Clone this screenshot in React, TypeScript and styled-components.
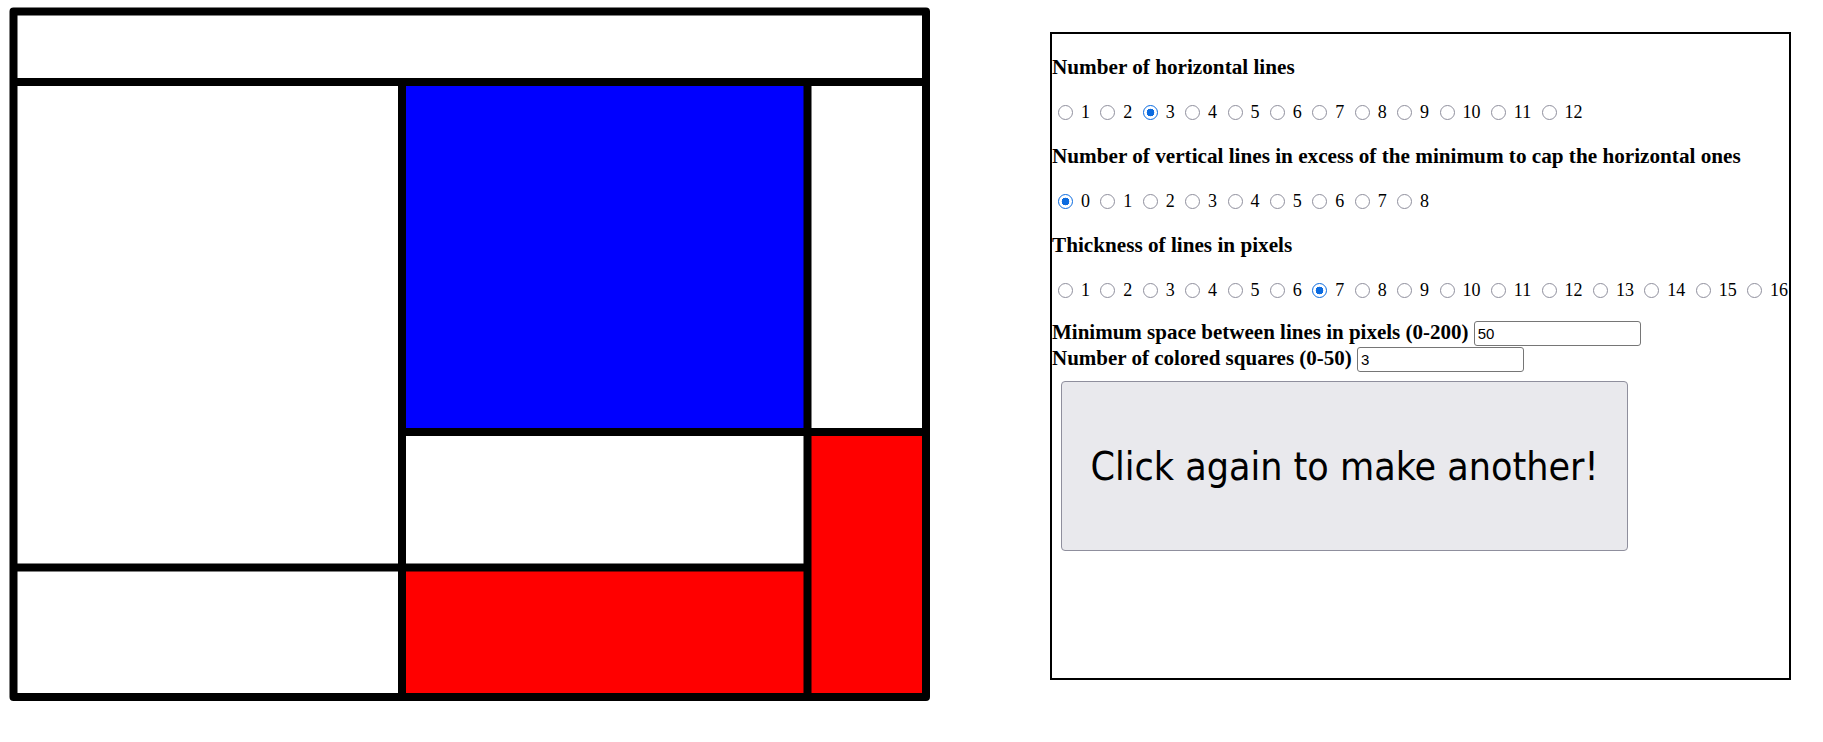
import React from 'react';
import styled, { createGlobalStyle } from 'styled-components';

const GlobalStyle = createGlobalStyle`
  html, body {
    margin: 0;
    padding: 0;
    background: #fff;
  }
`;

const range = (from: number, to: number) =>
  Array.from({ length: to - from + 1 }, (_, i) => from + i);

const groups = [
  { name: 'horizontal', title: 'Number of horizontal lines', values: range(1, 12), checked: 3 },
  {
    name: 'vertical',
    title: 'Number of vertical lines in excess of the minimum to cap the horizontal ones',
    values: range(0, 8),
    checked: 0,
  },
  { name: 'thickness', title: 'Thickness of lines in pixels', values: range(1, 16), checked: 7 },
];

// the painting: lines given by their centre, 8px strokes
const T = 8;
const L = 13.5;
const R = 926;
const TOP = 11.5;
const BOT = 697;
const H1 = 82;
const V1 = 402;
const V2 = 807.5;
const H2 = 432;
const H3 = 567.5;

const Painting = () => (
  <Canvas width={930} height={710} viewBox="0 0 930 710">
    <rect x={V1} y={H1} width={V2 - V1} height={H2 - H1} fill="#0000ff" />
    <rect x={V2} y={H2} width={R - V2} height={BOT - H2} fill="#ff0000" />
    <rect x={V1} y={H3} width={V2 - V1} height={BOT - H3} fill="#ff0000" />
    <g stroke="#000" strokeWidth={T}>
      <line x1={L} y1={H1} x2={R} y2={H1} />
      <line x1={V1} y1={H1} x2={V1} y2={BOT} />
      <line x1={V2} y1={H1} x2={V2} y2={BOT} />
      <line x1={V1} y1={H2} x2={R} y2={H2} />
      <line x1={L} y1={H3} x2={V2} y2={H3} />
      <rect
        x={L}
        y={TOP}
        width={R - L}
        height={BOT - TOP}
        fill="none"
        strokeLinejoin="round"
      />
    </g>
  </Canvas>
);

const App = () => {
  return (
    <Page>
      <GlobalStyle />
      <Painting />
      <Panel>
        {groups.map((g) => (
          <React.Fragment key={g.name}>
            <Heading>{g.title}</Heading>
            <RadioRow>
              {g.values.map((v) => (
                <React.Fragment key={v}>
                  <Radio type="radio" name={g.name} defaultChecked={v === g.checked} /> {v}{' '}
                </React.Fragment>
              ))}
            </RadioRow>
          </React.Fragment>
        ))}
        <Fields>
          <FieldLine>
            Minimum space between lines in pixels (0-200) <NumberInput type="text" defaultValue="50" />
          </FieldLine>
          <FieldLine>
            Number of colored squares (0-50) <NumberInput type="text" defaultValue="3" />
          </FieldLine>
        </Fields>
        <MakeButton type="button">Click again to make another!</MakeButton>
      </Panel>
    </Page>
  );
};

export default App;

const Page = styled.div`
  display: flex;
  align-items: flex-start;
  width: 1823px;
  height: 742px;
  overflow: hidden;
`;

const Canvas = styled.svg`
  display: block;
  flex: none;
`;

const Panel = styled.section`
  box-sizing: border-box;
  flex: none;
  width: 741px;
  height: 648px;
  margin: 32px 0 0 120px;
  border: 2px solid #000;
  font-family: 'Liberation Serif', 'Times New Roman', serif;
  font-size: 18px;
  color: #000;
`;

const Heading = styled.h3`
  margin: 21px 0;
  font-size: 21.2px;
  font-weight: bold;
`;

const RadioRow = styled.div`
  height: 22px;
  line-height: 22px;
  white-space: nowrap;
`;

const Radio = styled.input`
  appearance: none;
  box-sizing: border-box;
  width: 15px;
  height: 15px;
  margin: 0 3.4px 0 6px;
  vertical-align: -2px;
  border: 1.7px solid #8f8f9d;
  border-radius: 50%;
  background: #fff;

  &:checked {
    border: 1.8px solid #0b6be0;
    background: radial-gradient(circle, #0b6be0 0 3.6px, #fff 4.1px);
  }
`;

const Fields = styled.div`
  margin-top: 18px;
  font-size: 21px;
  font-weight: bold;
`;

const FieldLine = styled.div`
  height: 26px;
  line-height: 26px;
  white-space: nowrap;
`;

const NumberInput = styled.input`
  box-sizing: border-box;
  width: 167px;
  height: 25px;
  padding: 1px 3px;
  border: 1px solid #767676;
  border-radius: 3px;
  font-family: 'Liberation Sans', Arial, sans-serif;
  font-size: 15px;
  font-weight: normal;
  color: #000;
`;

const MakeButton = styled.button`
  display: block;
  width: 567px;
  height: 170px;
  margin: 10px 0 0 9px;
  background: #e9e9ed;
  border: 1px solid #8f8f9d;
  border-radius: 4px;
  font-family: 'DejaVu Sans Condensed', 'DejaVu Sans', sans-serif;
  font-stretch: condensed;
  font-size: 39px;
  color: #000;
`;
